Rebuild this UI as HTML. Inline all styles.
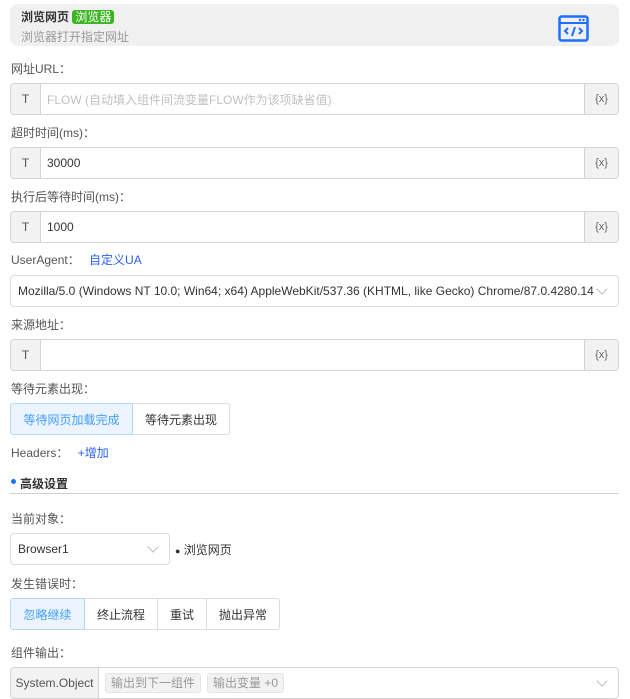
<!DOCTYPE html>
<html><head><meta charset="utf-8"><style>
*{box-sizing:border-box;margin:0;padding:0}
body{width:630px;height:699px;background:#fff;font-family:"Liberation Sans","Noto Sans CJK SC",sans-serif;font-size:12px;color:#333;position:relative;overflow:hidden}
.abs{position:absolute}
.hdr{left:10px;top:4px;width:609px;height:42px;background:#f0f0f0;border-radius:8px}
.lbl{left:11px;font-size:12px;color:#555}
.inp{left:10px;width:609px;height:32px;border:1px solid #d4d4d4;border-radius:4px;display:flex;overflow:hidden;background:#fff}
.inp .t{width:30px;background:#f2f2f2;border-right:1px solid #d4d4d4;display:flex;align-items:center;justify-content:center;color:#555;font-size:12px}
.inp .v{flex:1;display:flex;align-items:center;padding-left:6px;font-size:12px;color:#333}
.inp .x{width:34px;background:#f2f2f2;border-left:1px solid #d4d4d4;display:flex;align-items:center;justify-content:center;color:#666;font-size:11px}
.btns{display:flex;height:32px}
.btns div{border:1px solid #dcdcdc;margin-left:-1px;display:flex;align-items:center;justify-content:center;font-size:12px;color:#333;background:#fff}
.btns div:first-child{margin-left:0;border-radius:3px 0 0 3px}
.btns div:last-child{border-radius:0 3px 3px 0}
.btns div.on{background:#ecf5ff;border-color:#b3d8ff;color:#409eff;position:relative;z-index:1}
.chev{position:absolute;width:8px;height:8px;border-right:1px solid #bbb;border-bottom:1px solid #bbb;transform:rotate(45deg)}
.blue{color:#2b5ff0}
.tag{background:#f2f2f2;border:1px solid #e4e4e4;border-radius:3px;color:#999;padding:0 5px;height:20px;line-height:18px;margin-left:6px;font-size:12px}
</style></head><body>
<div class="abs hdr"></div>
<div class="abs" style="left:21px;top:8px;font-size:12px;font-weight:bold;color:#333">浏览网页 <span style="background:#3cb522;color:#fff;border-radius:3px;padding:0 3px;font-weight:normal">浏览器</span></div>
<div class="abs" style="left:21px;top:28px;font-size:12px;color:#999">浏览器打开指定网址</div>
<svg class="abs" style="left:558px;top:15px" width="31" height="27" viewBox="0 0 31 27"><rect x="1.5" y="1.5" width="28" height="24" rx="2" fill="none" stroke="#1e6fff" stroke-width="2.5"/><line x1="1.5" y1="8" x2="29.5" y2="8" stroke="#1e6fff" stroke-width="2"/><circle cx="22" cy="5" r="1.2" fill="#1e6fff"/><circle cx="25.5" cy="5" r="1.2" fill="#1e6fff"/><path d="M10 13l-3 3 3 3M21 13l3 3-3 3M17 12l-3 9" fill="none" stroke="#1e6fff" stroke-width="2"/></svg>

<div class="abs lbl" style="top:60px">网址URL：</div>
<div class="abs inp" style="top:83px"><div class="t">T</div><div class="v" style="color:#c0c0c0">FLOW (自动填入组件间流变量FLOW作为该项缺省值)</div><div class="x">{x}</div></div>
<div class="abs lbl" style="top:124px">超时时间(ms)：</div>
<div class="abs inp" style="top:147px"><div class="t">T</div><div class="v">30000</div><div class="x">{x}</div></div>
<div class="abs lbl" style="top:188px">执行后等待时间(ms)：</div>
<div class="abs inp" style="top:211px"><div class="t">T</div><div class="v">1000</div><div class="x">{x}</div></div>
<div class="abs lbl" style="top:251px">UserAgent： <span class="blue" style="margin-left:6px">自定义UA</span></div>
<div class="abs inp" style="top:275px;border-color:#dcdcdc"><div class="v" style="padding-left:7px;white-space:nowrap;overflow:hidden;padding-right:30px">Mozilla/5.0 (Windows NT 10.0; Win64; x64) AppleWebKit/537.36 (KHTML, like Gecko) Chrome/87.0.4280.14</div><div class="chev" style="right:12px;top:9px"></div></div>
<div class="abs lbl" style="top:316px">来源地址：</div>
<div class="abs inp" style="top:339px"><div class="t">T</div><div class="v"></div><div class="x">{x}</div></div>
<div class="abs lbl" style="top:380px">等待元素出现：</div>
<div class="abs btns" style="left:10px;top:403px"><div class="on" style="width:123px">等待网页加载完成</div><div style="width:98px">等待元素出现</div></div>
<div class="abs lbl" style="top:444px">Headers： <span class="blue" style="margin-left:6px">+增加</span></div>
<div class="abs" style="left:11px;top:479px;width:5px;height:5px;border-radius:50%;background:#1e6fff"></div>
<div class="abs" style="left:20px;top:475px;font-size:12px;font-weight:bold;color:#333">高级设置</div>
<div class="abs" style="left:10px;top:493px;width:609px;height:1px;background:#d0d0d0"></div>
<div class="abs lbl" style="top:510px">当前对象：</div>
<div class="abs inp" style="top:533px;width:160px;border-color:#dcdcdc"><div class="v" style="padding-left:7px">Browser1</div><div class="chev" style="right:12px;top:9px"></div></div>
<div class="abs" style="left:175px;top:541px;font-size:12px;color:#333"><span style="font-size:9px">●</span> 浏览网页</div>
<div class="abs lbl" style="top:575px">发生错误时：</div>
<div class="abs btns" style="left:10px;top:598px"><div class="on" style="width:75px">忽略继续</div><div style="width:74px">终止流程</div><div style="width:50px">重试</div><div style="width:74px">抛出异常</div></div>
<div class="abs lbl" style="top:644px">组件输出：</div>
<div class="abs inp" style="top:667px;align-items:center"><div class="t" style="width:88px;height:100%">System.Object</div><span class="tag">输出到下一组件</span><span class="tag">输出变量 +0</span><div class="chev" style="right:12px;top:9px"></div></div>
</body></html>
